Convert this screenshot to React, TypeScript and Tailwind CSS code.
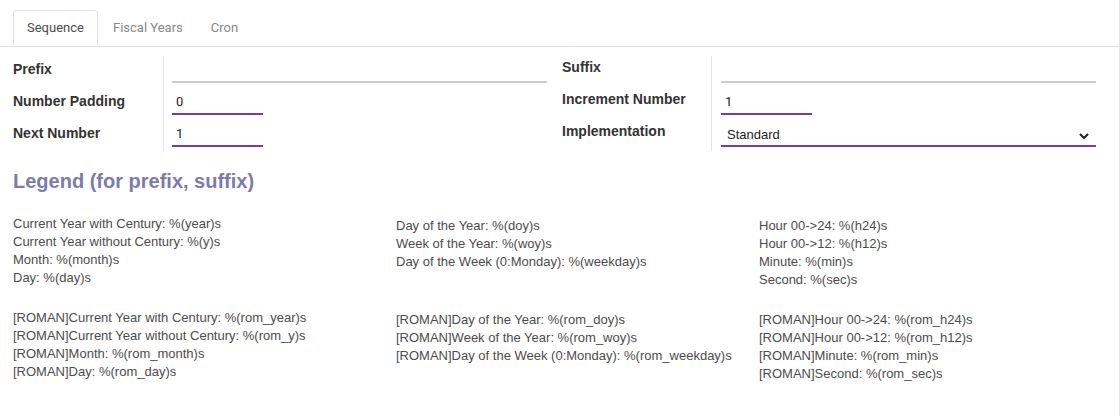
import React from 'react';

const col1 = [
  ['Current Year with Century: %(year)s', 'Current Year without Century: %(y)s', 'Month: %(month)s', 'Day: %(day)s'],
  [
    '[ROMAN]Current Year with Century: %(rom_year)s',
    '[ROMAN]Current Year without Century: %(rom_y)s',
    '[ROMAN]Month: %(rom_month)s',
    '[ROMAN]Day: %(rom_day)s',
  ],
];
const col2 = [
  ['Day of the Year: %(doy)s', 'Week of the Year: %(woy)s', 'Day of the Week (0:Monday): %(weekday)s'],
  [
    '[ROMAN]Day of the Year: %(rom_doy)s',
    '[ROMAN]Week of the Year: %(rom_woy)s',
    '[ROMAN]Day of the Week (0:Monday): %(rom_weekday)s',
  ],
];
const col3 = [
  ['Hour 00->24: %(h24)s', 'Hour 00->12: %(h12)s', 'Minute: %(min)s', 'Second: %(sec)s'],
  [
    '[ROMAN]Hour 00->24: %(rom_h24)s',
    '[ROMAN]Hour 00->12: %(rom_h12)s',
    '[ROMAN]Minute: %(rom_min)s',
    '[ROMAN]Second: %(rom_sec)s',
  ],
];

const Field = ({ label, children, lift }: { label: string; children: React.ReactNode; lift?: boolean }) => (
  <div className="flex h-8 items-center">
    <div
      className={`w-[150px] shrink-0 text-[14px] font-bold text-[#333] font-['Liberation_Sans',Arial,sans-serif] ${
        lift ? 'pb-[6px]' : 'pb-[2px]'
      }`}
    >
      {label}
    </div>
    <div className="flex-1 pl-[9px] h-full flex items-end pb-[3px]">{children}</div>
  </div>
);

const Input = ({ value, w, empty }: { value?: string; w?: string; empty?: boolean }) => (
  <div
    className={`${w ?? 'w-full'} h-[26px] flex items-end px-[4px] pb-[2px] text-[13px] text-[#222] border-b-2 ${
      empty ? 'border-[#cccccc]' : 'border-[#6a3fb5]'
    }`}
  >
    {value}
  </div>
);

const LegendCol = ({ blocks, className }: { blocks: string[][]; className: string }) => (
  <div className={className}>
    {blocks.map((b, i) => (
      <div key={i} className={i === 0 ? 'h-[94px]' : ''}>
        {b.map((t) => (
          <div key={t} className="leading-[18px]">
            {t}
          </div>
        ))}
      </div>
    ))}
  </div>
);

export default function App() {
  return (
    <div className="w-[1120px] h-[416px] bg-white border-r border-[#e4e4e4] font-['Roboto',sans-serif] text-[#4c4c4c] overflow-hidden">
      <div className="pt-[10px] border-b border-[#dee2e6] flex pl-[13px] text-[13px] font-['Roboto',sans-serif]">
        <div className="h-[36px] px-[13px] flex items-center border border-[#dee2e6] border-b-white -mb-px rounded-t-[4px] bg-white text-[#4c4c4c]">
          Sequence
        </div>
        <div className="h-[36px] px-[15px] flex items-center text-[#888]">Fiscal Years</div>
        <div className="h-[36px] px-[13px] flex items-center text-[#888]">Cron</div>
      </div>

      <div className="flex pl-[13px] pt-[7px]">
        <div className="w-[534px] relative">
          <div className="absolute left-[150px] top-[2px] bottom-[-1px] w-px bg-[#e6e6e6]" />
          <Field label="Prefix">
            <Input empty />
          </Field>
          <Field label="Number Padding">
            <Input value="0" w="w-[91px]" />
          </Field>
          <Field label="Next Number">
            <Input value="1" w="w-[91px]" />
          </Field>
        </div>
        <div className="w-[534px] ml-[15px] relative">
          <div className="absolute left-[149px] top-[2px] bottom-[-1px] w-px bg-[#e6e6e6]" />
          <Field label="Suffix" lift>
            <Input empty />
          </Field>
          <Field label="Increment Number" lift>
            <Input value="1" w="w-[91px]" />
          </Field>
          <Field label="Implementation" lift>
            <div className="w-full h-[26px] flex items-end justify-between px-[6px] pb-[1px] text-[13px] text-[#222] border-b-2 border-[#6a3fb5] font-['Liberation_Sans',Arial,sans-serif]">
              <span>Standard</span>
              <svg width="12" height="12" viewBox="0 0 12 12" className="mb-[2px]">
                <path d="M2 4l4 4 4-4" fill="none" stroke="#222" strokeWidth="2" />
              </svg>
            </div>
          </Field>
        </div>
      </div>

      <div className="pl-[13px] pt-[18px] text-[20px] font-bold text-[#7c7bad] font-['Liberation_Sans',Arial,sans-serif] leading-[26px]">
        Legend (for prefix, suffix)
      </div>

      <div className="flex pl-[13px] pt-[21px] text-[13px] text-[#4c4c4c] font-['Liberation_Sans',Arial,sans-serif]">
        <LegendCol blocks={col1} className="w-[383px]" />
        <LegendCol blocks={col2} className="w-[363px] pt-[2px]" />
        <LegendCol blocks={col3} className="pt-[2px]" />
      </div>
    </div>
  );
}
